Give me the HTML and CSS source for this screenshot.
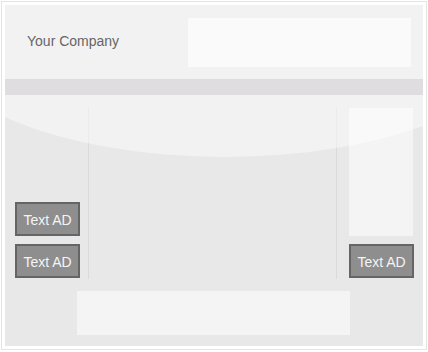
FILE: index.html
```html
<!DOCTYPE html>
<html lang="en">
<head>
  <meta charset="UTF-8">
  <meta name="viewport" content="width=device-width, initial-scale=1.0">
  <title>Layout Template</title>
  <link rel="stylesheet" href="styles.css">
</head>
<body>
  <div class="frame">
    <div class="panel">
      <!-- Header -->
      <header class="header">
        <div class="company">Your Company</div>
        <div class="logo-box"></div>
      </header>

      <div class="nav-bar"></div>

      <!-- Main Area -->
      <div class="main">
        <div class="columns">
          <div class="col-left">
            <div class="text-ad">Text AD</div>
            <div class="text-ad">Text AD</div>
          </div>
          <div class="col-center"></div>
          <div class="col-right">
            <div class="side-box"></div>
            <div class="text-ad">Text AD</div>
          </div>
        </div>
        <div class="footer-box"></div>

        <div class="gloss"></div>
      </div>
    </div>
  </div>
</body>
</html>
```

FILE: styles.css
```css
/* Base Styling */
body {
  margin: 0;
  padding: 0;
  background-color: #fff;
  font-family: "Liberation Sans", Arial, sans-serif;
}

.frame {
  margin: 1px;
  width: 418px;
  height: 341px;
  padding: 3px;
  border: 1px solid #e4e4e4;
}

.panel {
  width: 418px;
  height: 341px;
  display: flex;
  flex-direction: column;
}

/* Header */
.header {
  height: 74px;
  background-color: #f2f2f2;
  display: flex;
  align-items: flex-start;
  justify-content: space-between;
  padding: 0 12px 0 22px;
}

.company {
  margin-top: 28px;
  font-size: 14px;
  color: #666;
}

.logo-box {
  margin-top: 13px;
  width: 223px;
  height: 49px;
  background-color: #fafafa;
}

.nav-bar {
  height: 16px;
  background-color: #dfdddf;
}

/* Main Area */
.main {
  position: relative;
  overflow: hidden;
  flex: 1;
  background-color: #e8e8e8;
  padding-top: 12px;
}

.columns {
  display: flex;
  height: 172px;
}

.col-left {
  width: 73px;
  padding: 0 0 1px 10px;
  border-right: 1px solid #dadada;
  display: flex;
  flex-direction: column;
  justify-content: flex-end;
  gap: 8px;
}

.col-center {
  flex: 1;
}

.col-right {
  width: 74px;
  padding: 1px 0 1px 12px;
  border-left: 1px solid #dadada;
  display: flex;
  flex-direction: column;
  gap: 8px;
}

.side-box {
  width: 64px;
  flex: 1;
  background-color: #f4f4f4;
}

.text-ad {
  width: 61px;
  height: 28px;
  padding-top: 2px;
  line-height: 29px;
  border: 2px solid #656565;
  background-color: #8e8e8e;
  color: #f4f4f4;
  font-size: 14px;
  text-align: center;
}

.footer-box {
  margin: 12px 0 0 72px;
  width: 273px;
  height: 44px;
  background-color: #f4f4f4;
}

/* Glossy curve over the content */
.gloss {
  position: absolute;
  left: -80px;
  top: -188px;
  width: 600px;
  height: 250px;
  border-radius: 50%;
  background-color: rgba(255, 255, 255, 0.45);
  pointer-events: none;
}
```
